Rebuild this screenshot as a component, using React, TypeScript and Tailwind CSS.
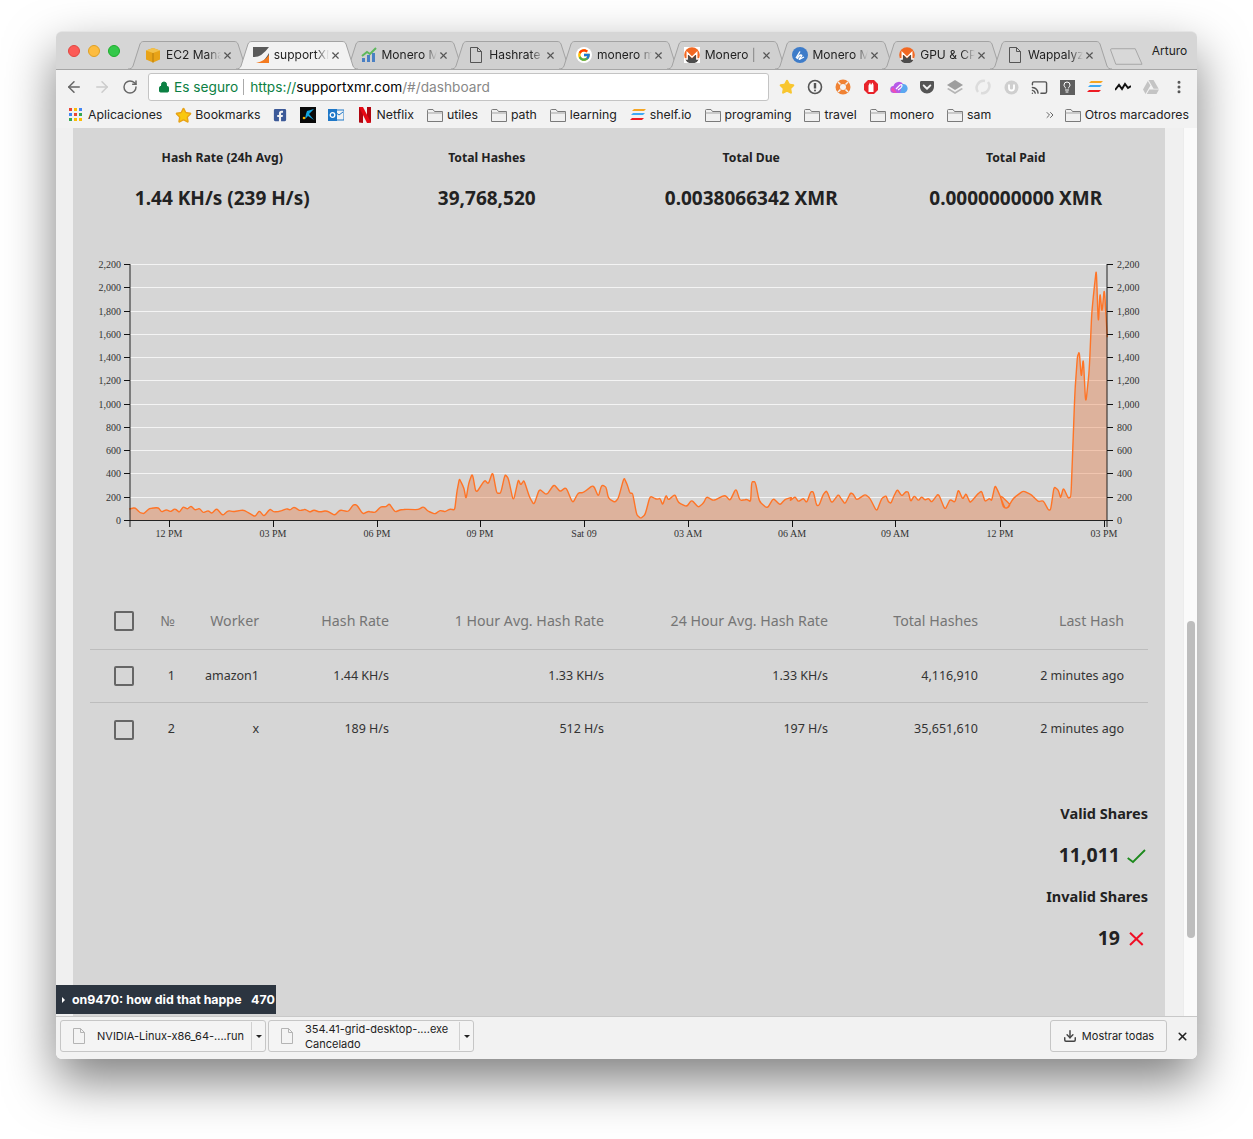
import { ArrowLeft, ArrowRight, RotateCw, Lock, Star, X, Cast, Download, ChevronsRight, EllipsisVertical, Lightbulb } from "lucide-react";
import { FaGetPocket, FaGoogleDrive, FaFacebookSquare } from "react-icons/fa";
import { FcGoogle } from "react-icons/fc";

const pageFont = { fontFamily: '"Noto Sans", sans-serif' };

// chart points read off the screenshot as [x offset * 3, y offset * 3]
const seg1: [number, number][] = [[208,207],[225,203],[240,218],[252,221],[268,205],[295,203],[305,216],[318,209],[332,215],[345,206],[358,217],[370,200],[382,207],[393,198],[405,210],[418,205],[430,218],[445,212],[455,220],[470,206],[488,226],[505,212],[520,215],[550,210],[565,218],[585,230],[598,212],[612,229],[630,207],[642,216],[660,214],[680,206],[690,210],[702,201],[720,212],[735,208],[750,216],[762,210],[778,216],[800,212],[824,226],[840,210],[865,215],[880,194],[890,194],[908,222],[925,214],[945,218],[962,200],[978,200],[988,191],[1005,216],[1020,210],[1035,208],[1075,209],[1090,200],[1105,214],[1125,222],[1140,211],[1155,215],[1170,207],[1184,210],[1190,160],[1198,116],[1205,130],[1212,145],[1218,178],[1226,130],[1237,100],[1248,160]];
const seg2: [number, number][] = [[14,60],[25,72],[38,35],[50,100],[62,100],[75,43],[85,55],[100,125],[115,58],[122,75],[132,60],[148,110],[162,135],[178,87],[200,105],[222,73],[240,95],[258,82],[278,130],[295,98],[310,98],[340,75],[355,110],[365,75],[378,80],[385,115],[405,127],[415,115],[432,52],[442,75],[450,100],[458,100],[470,165],[482,175],[495,165],[510,108],[530,118],[540,115],[548,135],[558,105],[565,120],[585,103],[595,128],[620,140],[635,120],[655,142],[670,130],[680,110],[700,122],[735,105],[750,122],[768,85],[780,122],[800,118],[812,125],[815,65],[826,65],[838,125],[862,145],[880,115],[900,135],[915,118],[935,112]];
const seg3: [number, number][] = [[0,122],[15,110],[25,125],[40,115],[50,128],[62,95],[70,95],[80,137],[88,135],[100,102],[110,92],[125,130],[145,103],[155,118],[165,132],[182,98],[190,103],[200,120],[225,103],[240,115],[260,155],[275,115],[288,107],[295,125],[303,130],[310,112],[322,88],[335,108],[348,95],[355,96],[362,125],[373,107],[385,122],[395,110],[405,120],[415,115],[425,127],[445,100],[465,150],[480,118],[495,127],[505,88],[518,118],[528,100],[540,128],[550,118],[565,100],[575,93],[585,125],[598,115],[605,122],[615,76],[625,95],[645,145],[655,142],[660,133]];
const seg4: [number, number][] = [[0,735],[10,772],[22,775],[40,745],[70,722],[95,735],[115,755],[130,752],[145,780],[152,780],[162,710],[175,720],[182,745],[190,713],[205,745],[213,740],[218,600],[225,420],[232,320],[238,305],[244,385],[250,322],[257,465],[268,360],[275,190],[282,120],[289,55],[295,225],[300,125],[306,190],[313,112],[322,262]];

const linePts = [
  ...seg1.map(([x, y]) => [60 + x / 3, 440 + y / 3]),
  ...seg2.map(([x, y]) => [480 + x / 3, 460 + y / 3]),
  ...seg3.map(([x, y]) => [790 + x / 3, 460 + y / 3]),
  ...seg4.map(([x, y]) => [1000 + x / 3, 250 + y / 3]),
];
// rounds only the corners, so the peaks keep their height
const linePath = linePts
  .map(([x, y], i) => {
    const prev = linePts[i - 1];
    const next = linePts[i + 1];
    if (!prev) return `M${x.toFixed(1)} ${y.toFixed(1)}`;
    if (!next) return `L${x.toFixed(1)} ${y.toFixed(1)}`;
    const ax = x + (prev[0] - x) * 0.25;
    const ay = y + (prev[1] - y) * 0.25;
    const bx = x + (next[0] - x) * 0.25;
    const by = y + (next[1] - y) * 0.25;
    return `L${ax.toFixed(1)} ${ay.toFixed(1)} Q${x.toFixed(1)} ${y.toFixed(1)} ${bx.toFixed(1)} ${by.toFixed(1)}`;
  })
  .join(" ");
const yTicks = [0, 200, 400, 600, 800, 1000, 1200, 1400, 1600, 1800, 2000, 2200];
const xTicks = [
  [169, "12 PM"], [273, "03 PM"], [377, "06 PM"], [480, "09 PM"], [584, "Sat 09"],
  [688, "03 AM"], [792, "06 AM"], [895, "09 AM"], [1000, "12 PM"], [1104, "03 PM"],
] as [number, string][];

function HashChart() {
  return (
    <svg viewBox="73 250 1092 295" className="block w-[1092px] h-[295px] mt-[37px]">
      {yTicks.slice(1).map((v) => {
        const y = Math.round(520 - (v * 256) / 2200) + 0.5;
        return <line key={v} x1={130} x2={1107} y1={y} y2={y} stroke="#f4f4f4" strokeWidth="1" />;
      })}
      <path d={`${linePath} L1107 520 L130 520 Z`} fill="#e9793f" fillOpacity="0.38" />
      <path d={linePath} fill="none" stroke="#ff7426" strokeWidth="1.4" strokeLinejoin="round" />
      <path d="M130 264V527M1107 264V527M130 520.5H1107" stroke="#111" strokeOpacity="0.9" fill="none" />
      {yTicks.map((v) => {
        const y = Math.round(520 - (v * 256) / 2200) + 0.5;
        return (
          <g key={v} style={{ fontFamily: '"Liberation Serif", serif', fontSize: 10 }} fill="#333">
            <line x1={124} x2={130} y1={y} y2={y} stroke="#111" />
            <line x1={1107} x2={1113} y1={y} y2={y} stroke="#111" />
            <text x={121} y={y + 3} textAnchor="end">{v.toLocaleString("en-US")}</text>
            <text x={1117} y={y + 3}>{v.toLocaleString("en-US")}</text>
          </g>
        );
      })}
      {xTicks.map(([x, label]) => (
        <g key={x} style={{ fontFamily: '"Liberation Serif", serif', fontSize: 10 }} fill="#333">
          <line x1={x + 0.5} x2={x + 0.5} y1={520} y2={527} stroke="#111" />
          <text x={x} y={537} textAnchor="middle">{label}</text>
        </g>
      ))}
    </svg>
  );
}

function MoneroIcon({ size = 16, square }: { size?: number; square?: boolean }) {
  return (
    <svg width={size} height={size} viewBox="0 0 16 16">
      {square && <rect width="16" height="16" fill="#fff" />}
      <circle cx="8" cy="8" r="7.800" fill="#f26822" />
      <path d="M1 12H4V7.500L8 11.500L12 7.500V12H15A7.800 7.800 0 0 1 1 12Z" fill="#4c4c4c" />
      <path d="M1 12H3.200V5.500L8 10.200L12.800 5.500V12H15" fill="none" stroke="#fff" strokeWidth="1.300" />
    </svg>
  );
}

function ShelfIcon() {
  return (
    <svg width="16" height="14" viewBox="0 0 16 14">
      <path d="M2 3L4 1H16L14 3Z" fill="#f6a623" />
      <path d="M1 7L3 5H15L13 7Z" fill="#3fa9f5" />
      <path d="M0 12L2 10H14L12 12Z" fill="#ed1c24" />
    </svg>
  );
}

function FileIcon({ className = "" }: { className?: string }) {
  return (
    <svg width="14" height="16" viewBox="0 0 14 16" fill="none" stroke="#555" className={className}>
      <path d="M1.5 .5H8.5L12.5 4.5V15.5H1.5ZM8.5 .5V4.5H12.5" />
    </svg>
  );
}

function FolderIcon() {
  return (
    <svg width="16" height="13" viewBox="0 0 16 13" fill="#f0f0f0" stroke="#7a7a7a">
      <path d="M.5 12.5V1.5Q.5 .5 1.5 .5H6L7.5 2.5H15.5V12.5Z" />
      <path d="M.5 4H15.5" stroke="#a5a5a5" />
    </svg>
  );
}

const tabs: { title: string; icon: React.ReactNode; active?: boolean }[] = [
  {
    title: "EC2 Management",
    icon: (
      <svg width="16" height="16" viewBox="0 0 16 16">
        <path d="M8 1L15 3.5V12.5L8 15.5L1 12.5V3.5Z" fill="#e8a317" />
        <path d="M1 3.5L8 6L15 3.5L8 1Z" fill="#f3c14b" />
        <path d="M8 6V15.5" stroke="#b57d0e" />
      </svg>
    ),
  },
  {
    title: "supportXMR",
    active: true,
    icon: (
      <svg width="16" height="16" viewBox="0 0 16 16">
        <rect width="16" height="16" fill="#5a5a5a" />
        <path d="M0 16V10Q8 11 16 0V6Q12 13 8 16Z" fill="#f2f2f2" />
        <path d="M3 16Q12 14 16 8V16Z" fill="#f47b20" />
      </svg>
    ),
  },
  {
    title: "Monero Mining",
    icon: (
      <svg width="16" height="16" viewBox="0 0 16 16">
        <path d="M1 15V11H4V15ZM6 15V8H9V15ZM11 15V6H14V15Z" fill="#4a80c4" />
        <path d="M1 9L6 5L9 7L15 1" fill="none" stroke="#5db85c" strokeWidth="2" />
      </svg>
    ),
  },
  { title: "Hashrate", icon: <FileIcon /> },
  { title: "monero mining", icon: <span className="w-4 h-4 rounded-full bg-white flex items-center justify-center"><FcGoogle size={14} /></span> },
  { title: "Monero | ", icon: <MoneroIcon square /> },
  {
    title: "Monero Mining",
    icon: (
      <svg width="16" height="16" viewBox="0 0 16 16">
        <circle cx="8" cy="8" r="8" fill="#3e7cc9" />
        <path d="M4 11L8 4.500M5 12Q7 8 9 8T8 11T12 10" fill="none" stroke="#fff" strokeWidth="1.300" />
      </svg>
    ),
  },
  { title: "GPU & CPU", icon: <MoneroIcon /> },
  { title: "Wappalyzer", icon: <FileIcon /> },
];

function Tab({ title, icon, active }: { title: string; icon: React.ReactNode; active?: boolean }) {
  return (
    <div className={`relative w-[122px] h-[28px] -mr-[14.25px] flex items-center pl-[17px] shrink-0 ${active ? "z-10" : ""}`}>
      <svg viewBox="0 0 122 28" className="absolute inset-0 w-[122px] h-[28px]">
        <path
          d="M0 28C3 28 4 27 5 25L12 3C13 1 14 .5 16 .5H106C108 .5 109 1 110 3L117 25C118 27 119 28 122 28"
          fill={active ? "#f2f2f2" : "#d0d0d0"}
          stroke="#a3a3a3"
        />
      </svg>
      <div className="relative w-4 h-4 flex items-center justify-center shrink-0">{icon}</div>
      <div className="relative ml-[5px] w-[55px] overflow-hidden whitespace-nowrap text-[12px] text-[#222] [mask-image:linear-gradient(to_right,black_75%,transparent)]">
        {title}
      </div>
      <X size={11} strokeWidth={2.5} className="relative ml-[1px] text-[#555] shrink-0" />
    </div>
  );
}

function TabStrip() {
  return (
    <div className="relative h-[38px] bg-[#d6d6d6] rounded-t-[6px] flex items-end pl-[72px] border-t border-[#e4e4e4]">
      <div className="absolute left-[12px] top-[13px] flex gap-[8px]">
        <span className="w-3 h-3 rounded-full bg-[#fc5b57] border border-[#e14640]" />
        <span className="w-3 h-3 rounded-full bg-[#fdbc40] border border-[#dfa023]" />
        <span className="w-3 h-3 rounded-full bg-[#34c84a] border border-[#1dad2b]" />
      </div>
      {tabs.map((t, i) => (
        <Tab key={i} {...t} />
      ))}
      <svg viewBox="0 0 34 17" className="w-[33px] h-[17px] ml-[12px] mb-[4px] shrink-0">
        <path d="M.5 1.5Q.5 .5 2 .5H26L33 16.5H6Z" fill="#d8d8d8" stroke="#a5a5a5" />
      </svg>
      <span className="ml-[9px] mb-[9px] text-[12px] text-[#222]">Arturo</span>
    </div>
  );
}

const extIcons: React.ReactNode[] = [
  <Star key="star" size={16} fill="#f8c62f" stroke="#f8c62f" />,
  <svg key="op" width="16" height="16" viewBox="0 0 16 16"><circle cx="8" cy="8" r="6.500" fill="none" stroke="#555" strokeWidth="1.600" /><path d="M8 4V9.500" stroke="#555" strokeWidth="2.400" /><circle cx="8" cy="11.500" r="1" fill="#555" /></svg>,
  <svg key="lb" width="16" height="16" viewBox="0 0 16 16"><circle cx="8" cy="8" r="7.500" fill="#f08233" /><circle cx="8" cy="8" r="3" fill="#f2f2f2" /><path d="M3 3L5.500 5.500M13 3L10.500 5.500M3 13L5.500 10.500M13 13L10.500 10.500" stroke="#f2f2f2" strokeWidth="1.500" /></svg>,
  <svg key="opera" width="16" height="16" viewBox="0 0 16 16"><path d="M5 1H11L15 5V11L11 15H5L1 11V5Z" fill="#e8232a" /><path d="M5.500 13V6.500L7 3.500L8 6L9.500 3.500L10.500 6V13Z" fill="#fff" /></svg>,
  <svg key="cloud" width="18" height="14" viewBox="0 0 18 14"><path d="M4 13A3.500 3.500 0 0 1 3.500 6A5.500 5.500 0 0 1 13.500 4.500A4.500 4.500 0 0 1 14 13Z" fill="#b65be8" /><path d="M1 10Q3 13 7 13L3 7Z" fill="#f04fb0" /><path d="M12 4A4.500 4.500 0 0 1 14 13H10Z" fill="#5aa8f0" /><path d="M6 9L10 5Q11.500 4 12 5.500T8 10" fill="none" stroke="#fff" strokeWidth="1.200" /></svg>,
  <FaGetPocket key="pocket" size={16} className="text-[#555]" />,
  <svg key="layers" width="18" height="16" viewBox="0 0 18 16"><path d="M9 1L17 6L9 11L1 6Z" fill="#9e9e9e" /><path d="M2.500 9L9 13L15.500 9L17 10L9 15L1 10Z" fill="#b5b5b5" /></svg>,
  <svg key="swirl" width="16" height="16" viewBox="0 0 16 16" fill="none" stroke="#dcdcdc" strokeWidth="2.500"><path d="M3 13A7 7 0 0 1 10 2" /><path d="M13 3A7 7 0 0 1 6 14" /></svg>,
  <svg key="u" width="15" height="15" viewBox="0 0 15 15"><circle cx="7.500" cy="7.500" r="7" fill="#cfcfcf" /><path d="M5 4.500V8A2.500 2.500 0 0 0 10 8V4.500" fill="none" stroke="#fff" strokeWidth="1.800" /></svg>,
  <Cast key="cast" size={17} className="text-[#555]" />,
  <span key="bulb" className="w-[15px] h-[15px] bg-[#5f5f5f] flex items-center justify-center"><Lightbulb size={12} className="text-white" /></span>,
  <ShelfIcon key="shelf" />,
  <svg key="mt" width="16" height="10" viewBox="0 0 16 10" fill="none" stroke="#111" strokeWidth="2"><path d="M0 8L4 3L7 7L10 2L13 6L16 4" /></svg>,
  <FaGoogleDrive key="drive" size={16} className="text-[#c4c4c4]" />,
  <EllipsisVertical key="menu" size={16} strokeWidth={2.500} className="text-[#555]" />,
];

function Toolbar() {
  return (
    <div className="h-[33px] pt-[2px] bg-[#f2f2f2] flex items-center border-t border-[#a6a6a6]">
      <ArrowLeft size={18} className="ml-[9px] text-[#666]" />
      <ArrowRight size={18} className="ml-[10px] text-[#ccc]" />
      <RotateCw size={16} strokeWidth={2.200} className="ml-[11px] text-[#666]" />
      <div className="ml-[10px] w-[621px] h-[28px] bg-white border border-[#c4c4c4] rounded-[3px] flex items-center pl-[9px] text-[13.7px]">
        <Lock size={12} fill="#0b8043" stroke="#0b8043" />
        <span className="ml-[4px] text-[#0b8043]">Es seguro</span>
        <span className="ml-[5px] mr-[6px] w-px h-[16px] bg-[#aaa]" />
        <span className="text-[#0b8043]">https://</span>
        <span className="text-black">supportxmr.com</span>
        <span className="text-[#888]">/#/dashboard</span>
      </div>
      <div className="ml-[4px] flex">
        {extIcons.map((icon, i) => (
          <div key={i} className="w-[28px] h-[20px] flex items-center justify-center">{icon}</div>
        ))}
      </div>
    </div>
  );
}

const folders = ["utiles", "path", "learning", "SHELF", "programing", "travel", "monero", "sam"];

function BookmarksBar() {
  return (
    <div className="h-[26px] bg-[#f2f2f2] flex items-center pl-[13px] gap-[13px] text-[12.3px] text-[#222]">
      <div className="flex items-center gap-[5px]">
        <svg width="14" height="14" viewBox="0 0 14 14">
          <path d="M0 0h3v3H0z" fill="#ea4335" /><path d="M5 0h3v3H5z" fill="#fbbc05" /><path d="M10 0h3v3h-3z" fill="#4285f4" />
          <path d="M0 5h3v3H0z" fill="#4285f4" /><path d="M5 5h3v3H5z" fill="#ea4335" /><path d="M10 5h3v3h-3z" fill="#34a853" />
          <path d="M0 10h3v3H0z" fill="#34a853" /><path d="M5 10h3v3H5z" fill="#fbbc05" /><path d="M10 10h3v3h-3z" fill="#fbbc05" />
        </svg>
        Aplicaciones
      </div>
      <div className="flex items-center gap-[3px]">
        <Star size={17} fill="#f9c80e" stroke="#e8a317" />
        Bookmarks
      </div>
      <FaFacebookSquare size={14} className="text-[#3b5998] -ml-px" />
      <svg width="16" height="16" viewBox="0 0 16 16">
        <rect width="16" height="16" fill="#0a0a0a" />
        <path d="M7 4L14 2L9 7L14 13L8 9L5 12L6 7Z" fill="#11a5e0" />
        <circle cx="4" cy="11" r="1.300" fill="#f7b500" />
      </svg>
      <svg width="16" height="16" viewBox="0 0 16 16" className="-ml-px">
        <rect x="6" y="3" width="10" height="10" fill="none" stroke="#1f78c8" />
        <path d="M7 5L11 8L15 5" fill="none" stroke="#1f78c8" />
        <rect y="2" width="9" height="12" fill="#1f78c8" />
        <circle cx="4.500" cy="8" r="2.300" fill="none" stroke="#fff" strokeWidth="1.300" />
      </svg>
      <div className="flex items-center gap-[6px] ml-[2px]">
        <svg width="12" height="16" viewBox="0 0 12 16">
          <path d="M0 0H4V16L0 15.500Z" fill="#b00610" />
          <path d="M8 0H12V15.500L8 16Z" fill="#b00610" />
          <path d="M0 0H4L12 15.500L8 16Z" fill="#e50914" />
        </svg>
        Netflix
      </div>
      {folders.map((f) =>
        f === "SHELF" ? (
          <div key={f} className="flex items-center gap-[4px]"><ShelfIcon />shelf.io</div>
        ) : (
          <div key={f} className="flex items-center gap-[4px]"><FolderIcon />{f}</div>
        ),
      )}
      <ChevronsRight size={12} className="ml-auto -mr-[4px] text-[#666]" />
      <div className="flex items-center gap-[4px] mr-[8px]"><FolderIcon />Otros marcadores</div>
    </div>
  );
}

function Stats() {
  const items = [
    ["Hash Rate (24h Avg)", "1.44 KH/s (239 H/s)"],
    ["Total Hashes", "39,768,520"],
    ["Total Due", "0.0038066342 XMR"],
    ["Total Paid", "0.0000000000 XMR"],
  ];
  return (
    <div className="ml-[17px] w-[1058px] grid grid-cols-4 pt-[20px] text-center text-[#222]" style={pageFont}>
      {items.map(([label, value]) => (
        <div key={label}>
          <div className="text-[12.2px] leading-[20px] font-bold">{label}</div>
          <div className="mt-[15px] text-[19px] leading-[30px] font-bold">{value}</div>
        </div>
      ))}
    </div>
  );
}

function Box() {
  return <span className="block w-[20px] h-[20px] border-2 border-[#666] rounded-[2px]" />;
}

const workers = [
  ["1", "amazon1", "1.44 KH/s", "1.33 KH/s", "1.33 KH/s", "4,116,910", "2 minutes ago"],
  ["2", "x", "189 H/s", "512 H/s", "197 H/s", "35,651,610", "2 minutes ago"],
];
const headers = ["№", "Worker", "Hash Rate", "1 Hour Avg. Hash Rate", "24 Hour Avg. Hash Rate", "Total Hashes", "Last Hash"];

function WorkerTable() {
  const cols = "grid grid-cols-[64px_21px_84px_130px_215px_224px_150px_146px] items-center text-right whitespace-nowrap";
  return (
    <div className="ml-[17px] w-[1058px] mt-[48px]" style={pageFont}>
      <div className={`${cols} h-[57px] border-b border-[#bdbdbd] text-[14.2px] text-[#757575]`}>
        <div className="pl-[24px]"><Box /></div>
        {headers.map((h) => <div key={h}>{h}</div>)}
      </div>
      {workers.map((w, i) => (
        <div key={w[0]} className={`${cols} h-[53px] text-[12.5px] text-[#333] ${i === 0 ? "border-b border-[#bdbdbd]" : ""}`}>
          <div className="pl-[24px]"><Box /></div>
          {w.map((c, j) => <div key={j}>{c}</div>)}
        </div>
      ))}
    </div>
  );
}

function Shares() {
  return (
    <div className="ml-[17px] w-[1058px] mt-[47px] text-right text-[#222] font-bold" style={pageFont}>
      <div className="text-[14.5px] leading-[20px]">Valid Shares</div>
      <div className="mt-[17px] flex items-center justify-end text-[19.5px] leading-[30px]">
        11,011
        <svg width="22" height="22" viewBox="0 0 22 22" fill="none" stroke="#1d8a1d" strokeWidth="1.800" className="ml-[6px]">
          <path d="M1.700 14L7 18L19 6" />
        </svg>
      </div>
      <div className="mt-[16px] text-[14.5px] leading-[20px]">Invalid Shares</div>
      <div className="mt-[17px] flex items-center justify-end text-[19.5px] leading-[30px]">
        19
        <svg width="22" height="22" viewBox="0 0 22 22" fill="none" stroke="#f00f26" strokeWidth="2" className="ml-[6px]">
          <path d="M4 5.700L16.700 18M16.700 5.700L4 18" />
        </svg>
      </div>
    </div>
  );
}

function DownloadItem({ name, status }: { name: string; status?: string }) {
  return (
    <div className="w-[206px] h-[32px] border border-[#c6c6c6] rounded-[3px] bg-[#f4f4f4] flex items-center">
      <FileIcon className="ml-[11px] opacity-40" />
      <div className="flex-1 ml-[11px] mt-px text-[11px] leading-[15px] text-[#222]">
        <div>{name}</div>
        {status && <div>{status}</div>}
      </div>
      <div className="w-[14px] h-[28px] border-l border-[#d0d0d0] flex items-center justify-center">
        <span className="w-0 h-0 border-x-[3px] border-x-transparent border-t-[3px] border-t-[#222]" />
      </div>
    </div>
  );
}

function DownloadBar() {
  return (
    <div className="relative h-[43px] bg-[#f2f2f2] border-t border-[#c8c8c8] rounded-b-[6px] flex items-start pt-[3px] pl-[4px] gap-[2px]" style={{ fontFamily: '"Inter", sans-serif' }}>
      <DownloadItem name="NVIDIA-Linux-x86_64-....run" />
      <DownloadItem name="354.41-grid-desktop-....exe" status="Cancelado" />
      <div className="ml-auto w-[117px] h-[32px] border border-[#c6c6c6] rounded-[3px] bg-[#f4f4f4] flex items-center justify-center gap-[5px] text-[11px] text-[#222]">
        <Download size={14} strokeWidth={2.500} className="text-[#444]" />
        Mostrar todas
      </div>
      <X size={13} strokeWidth={3} className="ml-[7px] mr-[8px] mt-[10px] text-[#222]" />
    </div>
  );
}

export default function App() {
  return (
    <div className="w-[1253px] h-[1139px] bg-white pt-[31px] pl-[56px] overflow-hidden" style={{ fontFamily: '"Inter", sans-serif' }}>
      <div className="w-[1141px] h-[1028px] rounded-[6px] flex flex-col shadow-[0_22px_50px_rgba(0,0,0,0.5)]">
        <TabStrip />
        <Toolbar />
        <BookmarksBar />
        <div className="relative flex-1 flex min-h-0">
          <div className="w-[17px] bg-[#f0f0f0]" />
          <div className="w-[1092px] bg-[#d6d6d6]">
            <Stats />
            <HashChart />
            <WorkerTable />
            <Shares />
          </div>
          <div className="w-[18px] bg-[#f0f0f0]" />
          <div className="w-[14px] bg-[#fafafa] border-l border-[#ececec] relative">
            <div className="absolute left-[3px] top-[493px] w-[8px] h-[317px] rounded-full bg-[#bdbdbd]" />
          </div>
          <div className="absolute left-0 bottom-[2px] w-[220px] h-[29px] pt-px bg-[#2c3540] flex items-center text-white text-[12.4px] font-bold pl-[6px]">
            <span className="w-0 h-0 border-y-[3px] border-y-transparent border-l-[3px] border-l-white" />
            <span className="ml-[7px] whitespace-nowrap overflow-hidden w-[172px]">on9470: how did that happe</span>
            <span className="ml-[7px]">470</span>
          </div>
        </div>
        <DownloadBar />
      </div>
    </div>
  );
}
